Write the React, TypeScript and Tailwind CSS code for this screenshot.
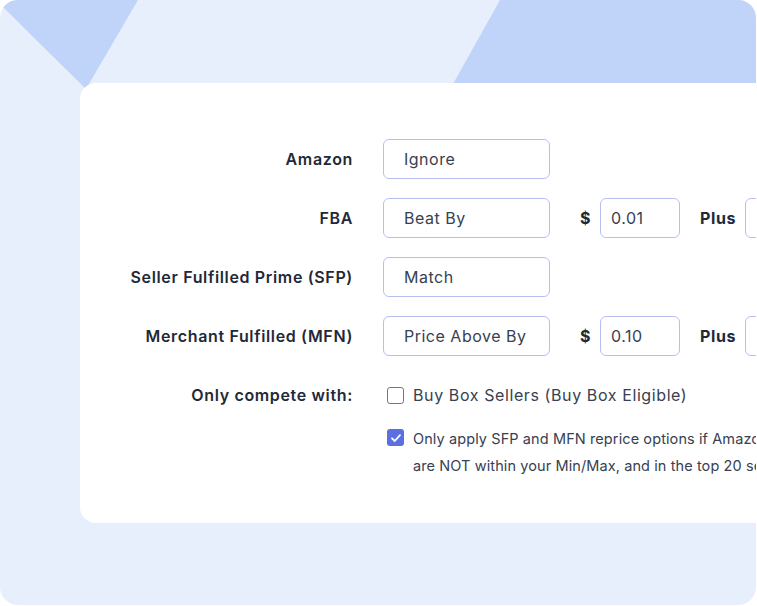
import React from 'react';

const font = { fontFamily: 'Inter, "Noto Sans", sans-serif' };

function Field({ value, width = 'w-[167px]', pad = 'pl-5' }: { value: string; width?: string; pad?: string }) {
  return (
    <div
      className={`${width} ${pad} h-10 shrink-0 flex items-center rounded-md border border-[#b7bff2] bg-white text-[16px] tracking-[0.5px] text-[#374151]`}
    >
      {value}
    </div>
  );
}

function Row({ label, children }: { label: string; children: React.ReactNode }) {
  return (
    <div className="flex items-center h-10">
      <div className="w-[273px] shrink-0 text-right text-[16px] font-semibold tracking-[0.65px] text-[#1f2937] whitespace-nowrap">
        {label}
      </div>
      <div className="ml-[30px] flex items-center">{children}</div>
    </div>
  );
}

function Extras({ amount }: { amount: string }) {
  return (
    <>
      <span className="ml-[30px] w-[10px] text-[16px] font-bold text-[#1f2937]">$</span>
      <div className="ml-[10px]">
        <Field value={amount} width="w-[80px]" pad="pl-[10px]" />
      </div>
      <span className="ml-5 text-[16px] font-bold tracking-[0.6px] text-[#1f2937]">Plus</span>
      <div className="ml-[9px]">
        <Field value="" width="w-[80px]" pad="pl-[10px]" />
      </div>
    </>
  );
}

export default function App() {
  return (
    <div className="w-[757px] h-[606px] bg-white" style={font}>
      <div className="relative w-[756px] h-[605px] rounded-[18px] bg-[#e8effc] overflow-hidden">
        {/* decorative shapes */}
        <svg className="absolute left-0 top-0" width="756" height="100" viewBox="0 0 756 100">
          <path d="M0 0 L138 0 L86 89 Q42 46 0 4 Z" fill="#c0d4fa" />
          <path d="M500 0 L756 0 L756 84 L453 84 Z" fill="#c0d4fa" />
        </svg>

        <div className="relative mt-[83px] ml-[80px] w-[820px] h-[440px] rounded-l-2xl bg-white pt-[56px]">
          <div className="flex flex-col gap-[19px]">
            <Row label="Amazon">
              <Field value="Ignore" />
            </Row>
            <Row label="FBA">
              <Field value="Beat By" />
              <Extras amount="0.01" />
            </Row>
            <Row label="Seller Fulfilled Prime (SFP)">
              <Field value="Match" />
            </Row>
            <Row label="Merchant Fulfilled (MFN)">
              <Field value="Price Above By" />
              <Extras amount="0.10" />
            </Row>
            <Row label="Only compete with:">
              <div className="ml-1 flex items-center gap-[9px]">
                <span className="w-[17px] h-[17px] rounded-[3px] border-[1.5px] border-[#767676] bg-white" />
                <span className="text-[16px] tracking-[0.6px] text-[#374151] whitespace-nowrap">
                  Buy Box Sellers (Buy Box Eligible)
                </span>
              </div>
            </Row>
          </div>

          <div className="mt-[10px] ml-[307px] flex items-start gap-[9px]">
            <span className="mt-[4px] w-[17px] h-[17px] shrink-0 rounded-[3px] bg-[#5b6fe0] flex items-center justify-center">
              <svg width="12" height="12" viewBox="0 0 12 12" fill="none">
                <path d="M2 6.3 L4.8 9 L10 3.2" stroke="white" strokeWidth="1.8" strokeLinecap="round" strokeLinejoin="round" />
              </svg>
            </span>
            <div className="text-[14.5px] leading-[27px] tracking-[0.1px] text-[#374151] whitespace-nowrap">
              <div>Only apply SFP and MFN reprice options if Amazon and FBA sellers</div>
              <div>are NOT within your Min/Max, and in the top 20 sellers.</div>
            </div>
          </div>
        </div>
      </div>
    </div>
  );
}
